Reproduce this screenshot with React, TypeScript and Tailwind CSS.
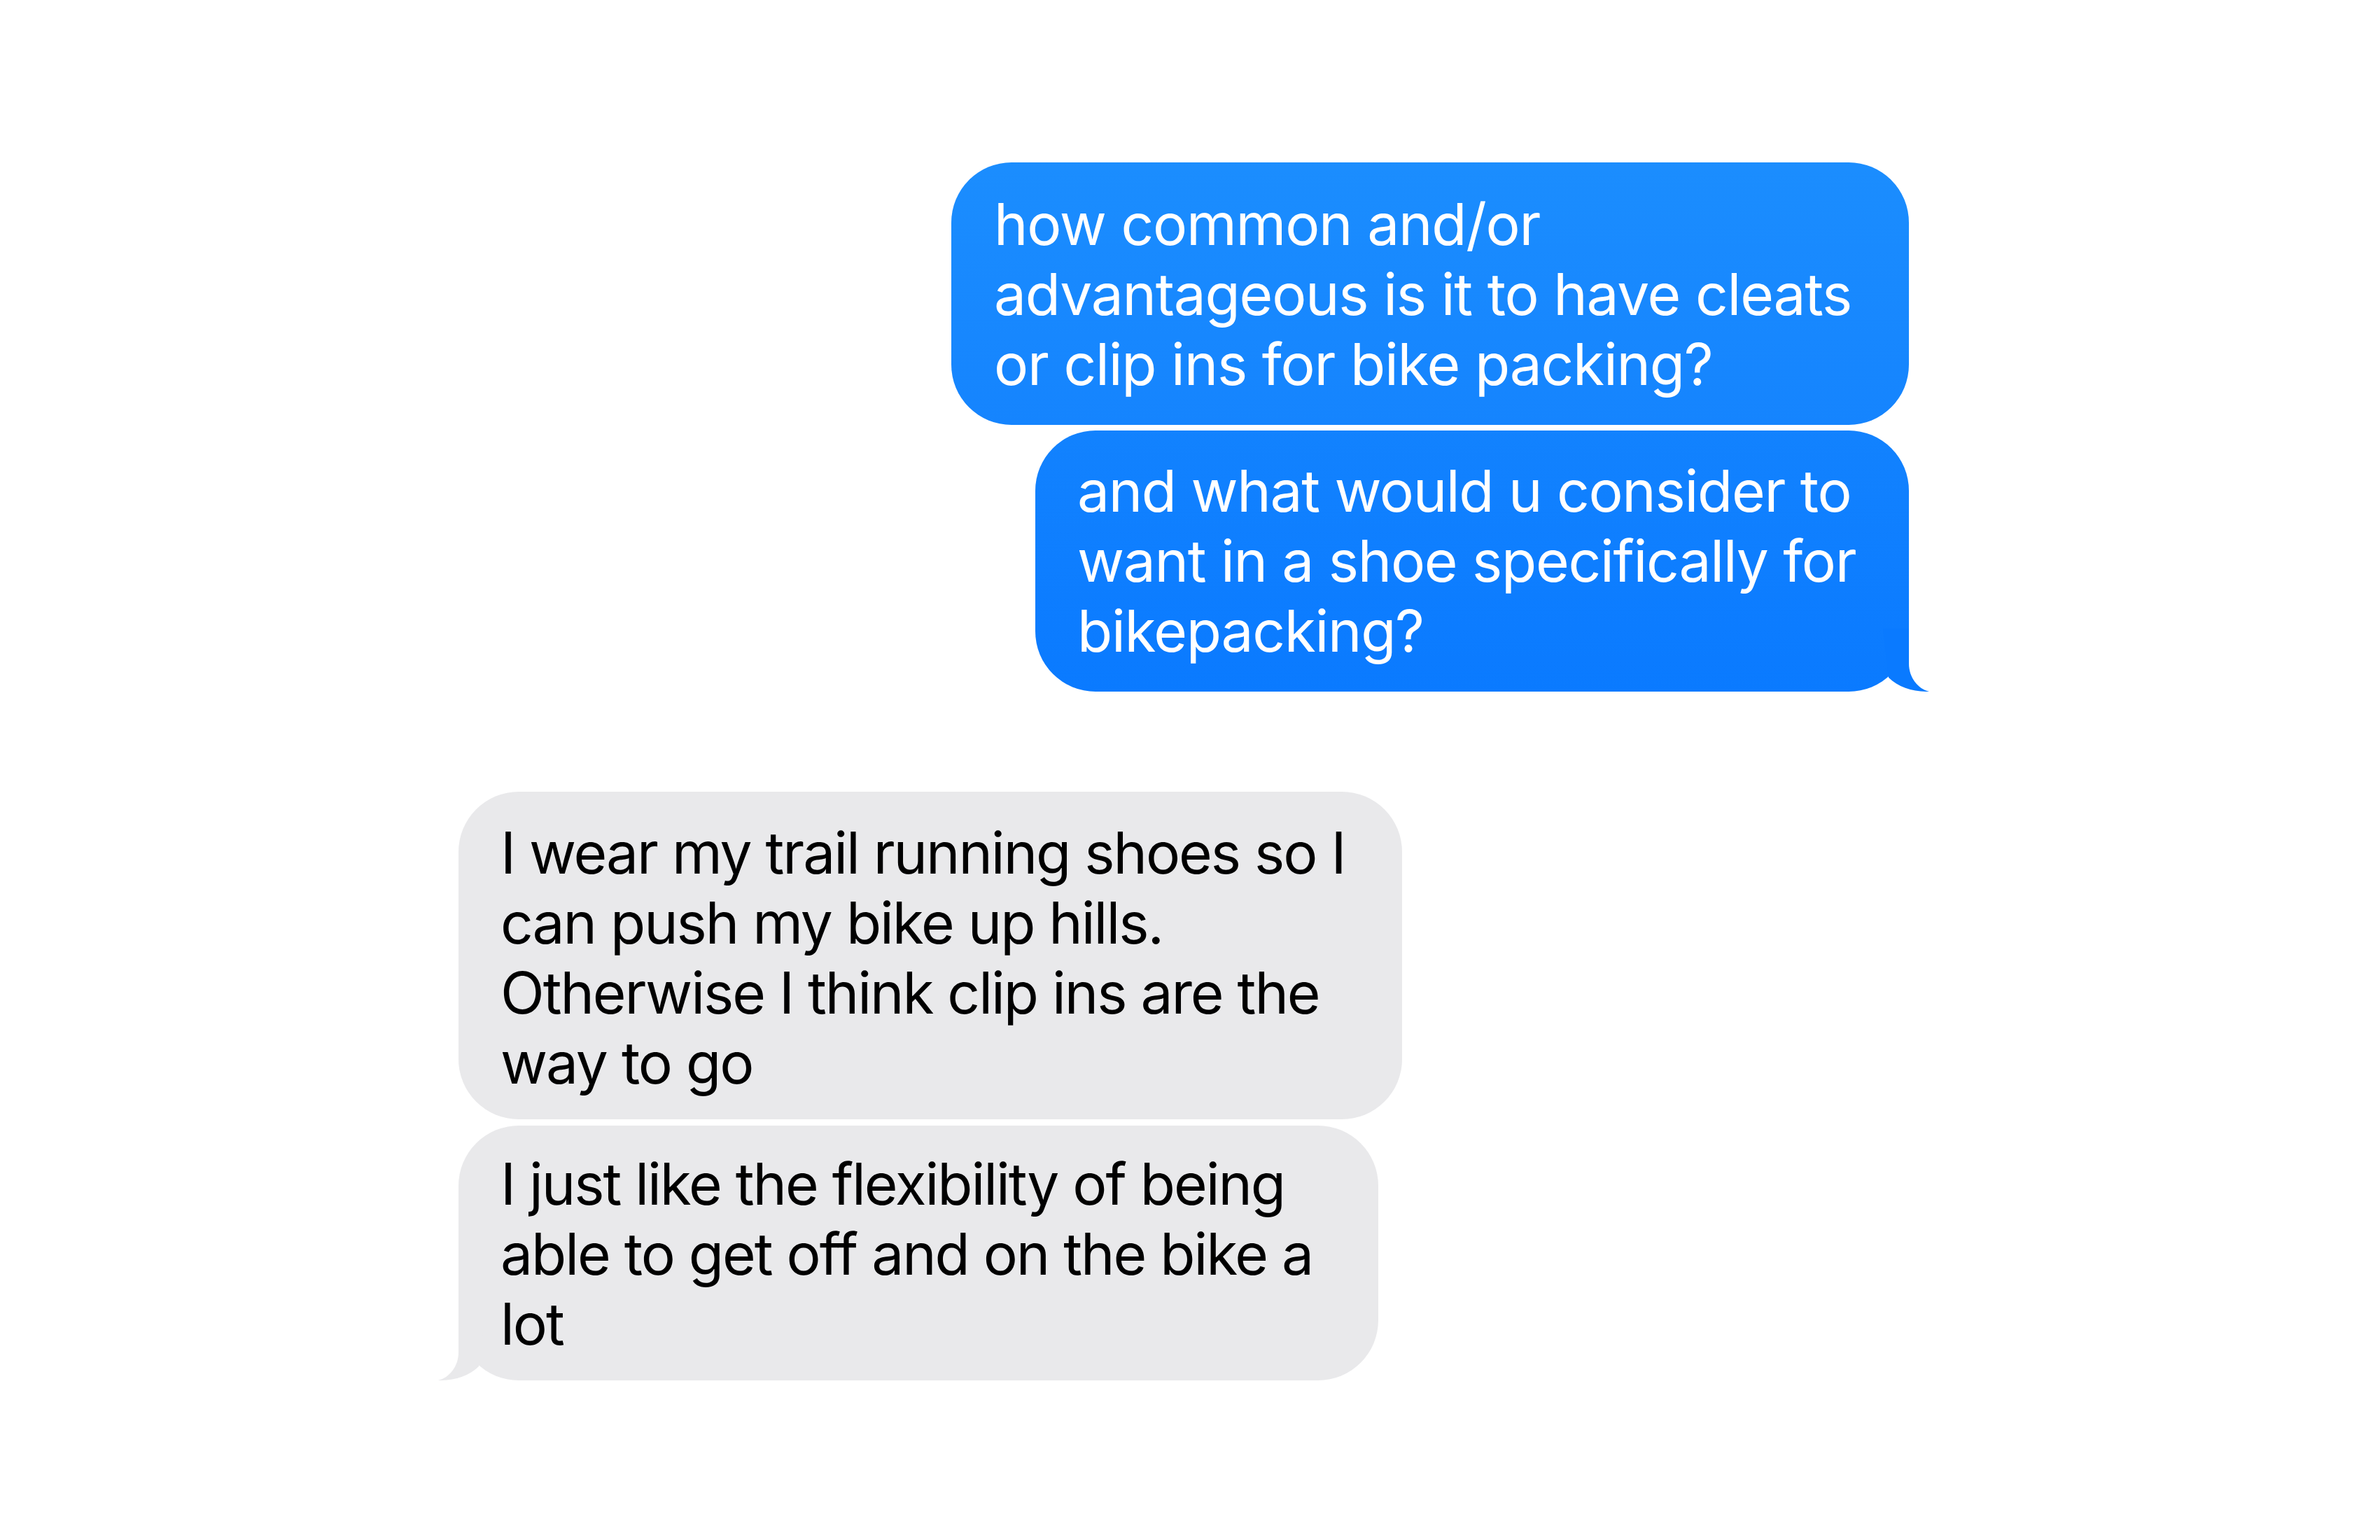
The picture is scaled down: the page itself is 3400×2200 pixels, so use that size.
import React from 'react';

const FONT = "font-['Inter','Roboto','Liberation_Sans',sans-serif]";

function SentTail() {
  // bubble tail on the lower right of the last sent message
  return (
    <svg
      className="absolute bottom-0 right-[-31px] w-[70px] h-[90px]"
      viewBox="0 0 70 90"
      fill="#0a7aff"
    >
      <path d="M39,0 L39,50 C39,70 52,86 68,90 C46,90.5 24,84 10,70 L2,0 Z" />
    </svg>
  );
}

function ReceivedTail() {
  return (
    <svg
      className="absolute bottom-0 left-[-31px] w-[70px] h-[90px]"
      viewBox="0 0 70 90"
      fill="#e9e9eb"
    >
      <path d="M31,0 L31,50 C31,70 18,86 2,90 C24,90.5 46,84 60,70 L68,0 Z" />
    </svg>
  );
}

function Lines({ lines }: { lines: string[] }) {
  return (
    <>
      {lines.map((l) => (
        <div key={l} className="whitespace-nowrap">
          {l}
        </div>
      ))}
    </>
  );
}

export default function App() {
  return (
    <div className={`w-[3400px] h-[2200px] bg-white flex flex-col pt-[232px] pl-[655px] pr-[673px] ${FONT}`}>
      {/* Sent */}
      <div className="flex flex-col items-end gap-[8px]">
        <div className="w-[1368px] h-[375px] rounded-[86px] bg-gradient-to-b from-[#1b8dfe] to-[#1584fe] pl-[61px] pt-[39px] text-white text-[82px] leading-[100px] tracking-[-0.015em]">
          <Lines
            lines={[
              'how common and/or',
              'advantageous is it to have cleats',
              'or clip ins for bike packing?',
            ]}
          />
        </div>
        <div className="relative w-[1248px] h-[373px] rounded-[86px] bg-gradient-to-b from-[#1282fe] to-[#0a7aff] pl-[60px] pt-[37px] text-white text-[82px] leading-[100px] tracking-[-0.016em]">
          <Lines
            lines={[
              'and what would u consider to',
              'want in a shoe specifically for',
              'bikepacking?',
            ]}
          />
          <SentTail />
        </div>
      </div>

      {/* Received */}
      <div className="mt-[143px] flex flex-col items-start gap-[9px]">
        <div className="w-[1348px] h-[468px] rounded-[86px] bg-[#e9e9eb] pl-[60px] pt-[38px] text-black text-[82px] leading-[100px] tracking-[-0.025em]">
          <Lines
            lines={[
              'I wear my trail running shoes so I',
              'can push my bike up hills.',
              'Otherwise I think clip ins are the',
              'way to go',
            ]}
          />
        </div>
        <div className="relative w-[1314px] h-[364px] rounded-[86px] bg-[#e9e9eb] pl-[60px] pt-[34px] text-black text-[82px] leading-[100px] tracking-[-0.025em]">
          <Lines
            lines={[
              'I just like the flexibility of being',
              'able to get off and on the bike a',
              'lot',
            ]}
          />
          <ReceivedTail />
        </div>
      </div>
    </div>
  );
}
